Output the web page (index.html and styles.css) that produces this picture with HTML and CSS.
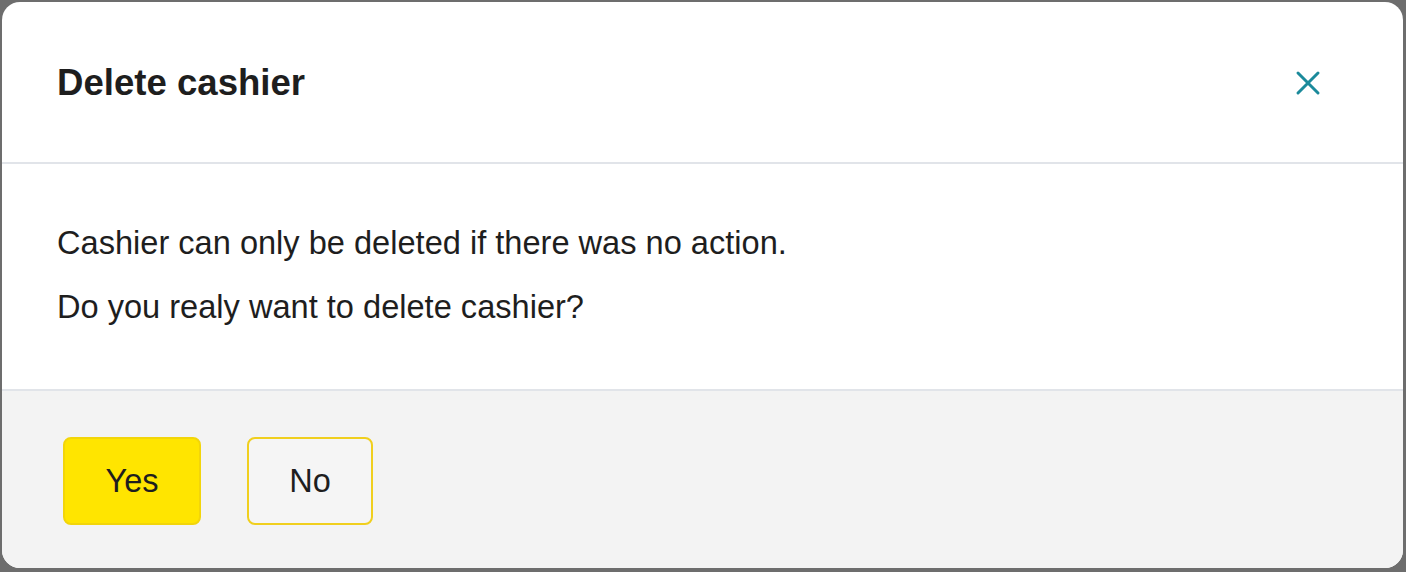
FILE: index.html
```html
<html>
<head>
    <title>Delete cashier</title>
    <link rel="stylesheet" href="styles.css">
</head>
<body>

<div class="modal">
    <div class="modal-header">
        <h1>Delete cashier</h1>
        <button class="close" onclick="closeModal()" aria-label="Close">
            <svg width="26" height="26" viewBox="0 0 26 26">
                <path d="M3 3 L23 23 M23 3 L3 23" stroke="#1b8a9b" stroke-width="3" stroke-linecap="round" fill="none"/>
            </svg>
        </button>
    </div>

    <div class="modal-body">
        <p>Cashier can only be deleted if there was no action.</p>
        <p>Do you realy want to delete cashier?</p>
    </div>

    <div class="modal-footer">
        <button class="btn btn-yes" onclick="closeModal()">Yes</button>
        <button class="btn btn-no" onclick="closeModal()">No</button>
    </div>
</div>

<script>
function closeModal() {
    // nothing to go back to here
}
</script>

</body>
</html>
```

FILE: styles.css
```css
body {
    background-color: #6d6d6d;
    font-family: 'Liberation Sans', Arial, sans-serif;
    color: #1e1e1e;
    margin: 0;
    padding: 2px 3px 4px 2px;
    height: 100vh;
    box-sizing: border-box;
}

.modal {
    background-color: #fff;
    height: 100%;
    border-radius: 18px;
    overflow: hidden;
    display: flex;
    flex-direction: column;
}

.modal-header {
    flex-shrink: 0;
    height: 162px;
    box-sizing: border-box;
    border-bottom: 2px solid #e1e4e9;
    display: flex;
    align-items: center;
    justify-content: space-between;
    padding: 2px 82px 0 55px;
}

.modal-header h1 {
    font-size: 36.6px;
    font-weight: bold;
    margin: 0;
}

.close {
    background: none;
    border: none;
    padding: 0;
    width: 26px;
    height: 26px;
    cursor: pointer;
}

.close svg {
    display: block;
}

.modal-body {
    flex-shrink: 0;
    padding: 59px 55px 62px;
    display: flex;
    flex-direction: column;
    gap: 24px;
}

.modal-body p {
    margin: 0;
    font-size: 32.6px;
    line-height: 40px;
}

.modal-footer {
    flex: 1;
    background-color: #f3f3f3;
    border-top: 2px solid #e1e4e9;
    padding: 46px 61px 0;
    display: flex;
    align-items: flex-start;
    gap: 46px;
}

.btn {
    height: 88px;
    border-radius: 8px;
    font-family: 'Liberation Sans', Arial, sans-serif;
    font-size: 32.5px;
    color: #1e1e1e;
    cursor: pointer;
    padding: 0;
}

.btn-yes {
    width: 138px;
    background-color: #ffe500;
    border: 2px solid #f2d50a;
}

.btn-no {
    width: 126px;
    background-color: #f5f5f5;
    border: 2px solid #f0cf1e;
}
```
